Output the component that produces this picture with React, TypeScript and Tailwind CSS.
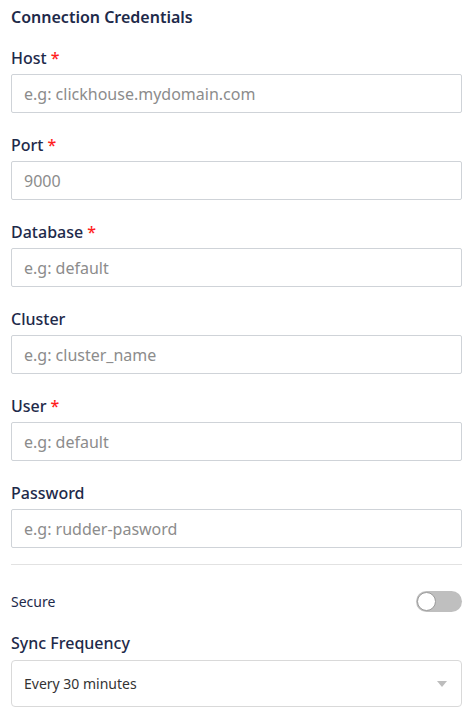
import React from "react";

const fields = [
  { label: "Host", required: true, placeholder: "e.g: clickhouse.mydomain.com" },
  { label: "Port", required: true, placeholder: "9000" },
  { label: "Database", required: true, placeholder: "e.g: default" },
  { label: "Cluster", required: false, placeholder: "e.g: cluster_name" },
  { label: "User", required: true, placeholder: "e.g: default" },
  { label: "Password", required: false, placeholder: "e.g: rudder-pasword" },
];

export default function App() {
  return (
    <div
      className="w-[467px] min-h-[716px] bg-white pl-[11px] pr-[5px] pt-[5px]"
      style={{ fontFamily: '"Noto Sans", "Open Sans", sans-serif' }}
    >
      <h2 className="text-[16px] leading-6 font-semibold text-[#1e2a4a]">Connection Credentials</h2>

      <div className="mt-[17px] flex flex-col gap-5">
        {fields.map((f) => (
          <div key={f.label} className="flex flex-col gap-1">
            <label className="text-[16px] leading-6 font-medium text-[#1e2a4a]">
              {f.label}
              {f.required && <span className="ml-1 text-[#ff1f1f]">*</span>}
            </label>
            <input
              className="h-[39px] w-full rounded-[2px] border border-[#cfd3d8] px-3 text-[16px] text-[#333] outline-none placeholder:text-[#8c8c8c]"
              placeholder={f.placeholder}
            />
          </div>
        ))}
      </div>

      <div className="mt-4 h-px w-full bg-[#e2e2e2]" />

      <div className="mt-[26px] flex items-center justify-between">
        <span className="text-[14px] text-[#1e2a4a]">Secure</span>
        <button className="relative h-[21px] w-[46px] rounded-full bg-[#bfbfbf]">
          <span className="absolute left-[1px] top-[1px] h-[19px] w-[19px] rounded-full border border-[#9a9a9a] bg-white" />
        </button>
      </div>

      <div className="mt-[19px] text-[16px] leading-6 font-medium text-[#1e2a4a]">Sync Frequency</div>
      <div className="mt-[5px] flex h-[47px] w-full items-center justify-between rounded-[4px] border border-[#d9d9d9] px-3">
        <span className="text-[14px] text-[#333]">Every 30 minutes</span>
        <span className="mr-[2px] h-0 w-0 border-x-[5px] border-t-[6px] border-x-transparent border-t-[#bdbdbd]" />
      </div>
    </div>
  );
}
